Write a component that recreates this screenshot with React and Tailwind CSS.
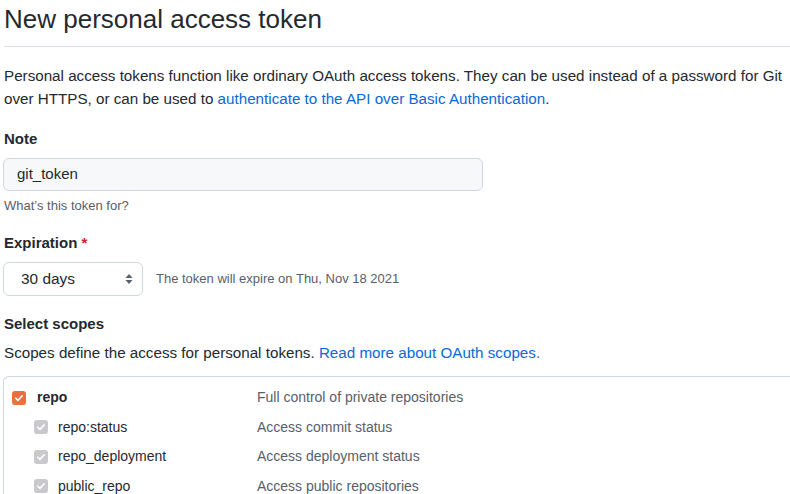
const scopes = [
  { name: "repo:status", desc: "Access commit status" },
  { name: "repo_deployment", desc: "Access deployment status" },
  { name: "public_repo", desc: "Access public repositories" },
];

const Check = ({ color }) => (
  <span className={`flex h-[14px] w-[14px] items-center justify-center rounded-[3px] ${color}`}>
    <svg width="10" height="10" viewBox="0 0 10 10" fill="none">
      <path d="M1.8 5.2l2.2 2.2 4.2-4.6" stroke="white" strokeWidth="1.6" strokeLinecap="round" strokeLinejoin="round" />
    </svg>
  </span>
);

const App = () => {
  return (
    <div className="h-[494px] w-[790px] overflow-hidden bg-white pl-[4px] font-['Liberation_Sans',Arial,sans-serif] text-[#24292f]">
      <h2 className="pt-[1px] text-[26px] leading-[36px] font-normal">New personal access token</h2>
      <div className="mt-[9px] border-b border-[#d8dee4]"></div>

      <p className="mt-[17px] text-[15.2px] leading-[23px]">
        Personal access tokens function like ordinary OAuth access tokens. They can be used instead of a password for Git
        over HTTPS, or can be used to{" "}
        <a className="text-[#0969da]">authenticate to the API over Basic Authentication</a>.
      </p>

      <div className="mt-[19px]">
        <label className="block text-[15px] leading-[20px] font-bold">Note</label>
        <div className="mt-[9px] flex h-[33px] w-[480px] -ml-[1px] items-center rounded-[6px] border border-[#d0d7de] bg-[#f6f8fa] px-[13px] text-[15px]">
          git_token
        </div>
        <p className="mt-[7px] text-[13px] leading-[16px] text-[#57606a]">What’s this token for?</p>
      </div>

      <div className="mt-[19px]">
        <label className="block text-[15px] leading-[20px] font-bold">
          Expiration <span className="text-[#cf222e]">*</span>
        </label>
        <div className="mt-[9px] flex items-center">
          <div className="-ml-[1px] flex h-[34px] w-[140px] items-center justify-between rounded-[6px] border border-[#d0d7de] bg-white pl-[17px] pr-[9px] text-[15.4px]">
            <span>30 days</span>
            <svg width="8" height="12" viewBox="0 0 8 12" fill="#57606a">
              <path d="M4 1L7.5 5H0.5z" />
              <path d="M4 11L7.5 7H0.5z" />
            </svg>
          </div>
          <span className="ml-[13px] text-[13px] text-[#57606a]">The token will expire on Thu, Nov 18 2021</span>
        </div>
      </div>

      <div className="mt-[18px]">
        <label className="block text-[15px] leading-[20px] font-bold">Select scopes</label>
        <p className="mt-[9px] text-[15.2px] leading-[20px]">
          Scopes define the access for personal tokens. <a className="text-[#0969da]">Read more about OAuth scopes.</a>
        </p>
        <div className="mt-[13px] -ml-[1px] rounded-tl-[6px] border-l border-t border-[#d0d7de] pt-[12px] text-[14px]">
          <div className="flex h-[17px] items-center">
            <div className="flex w-[253px] items-center pl-[8px]">
              <Check color="bg-[#ea7040]" />
              <span className="ml-[11px] font-bold">repo</span>
            </div>
            <span className="text-[#57606a]">Full control of private repositories</span>
          </div>
          {scopes.map((s) => (
            <div key={s.name} className="mt-[12.5px] flex h-[17px] items-center">
              <div className="flex w-[253px] items-center pl-[30px]">
                <Check color="bg-[#c9c9cd]" />
                <span className="ml-[10px]">{s.name}</span>
              </div>
              <span className="text-[#57606a]">{s.desc}</span>
            </div>
          ))}
        </div>
      </div>
    </div>
  );
};

export default App;
